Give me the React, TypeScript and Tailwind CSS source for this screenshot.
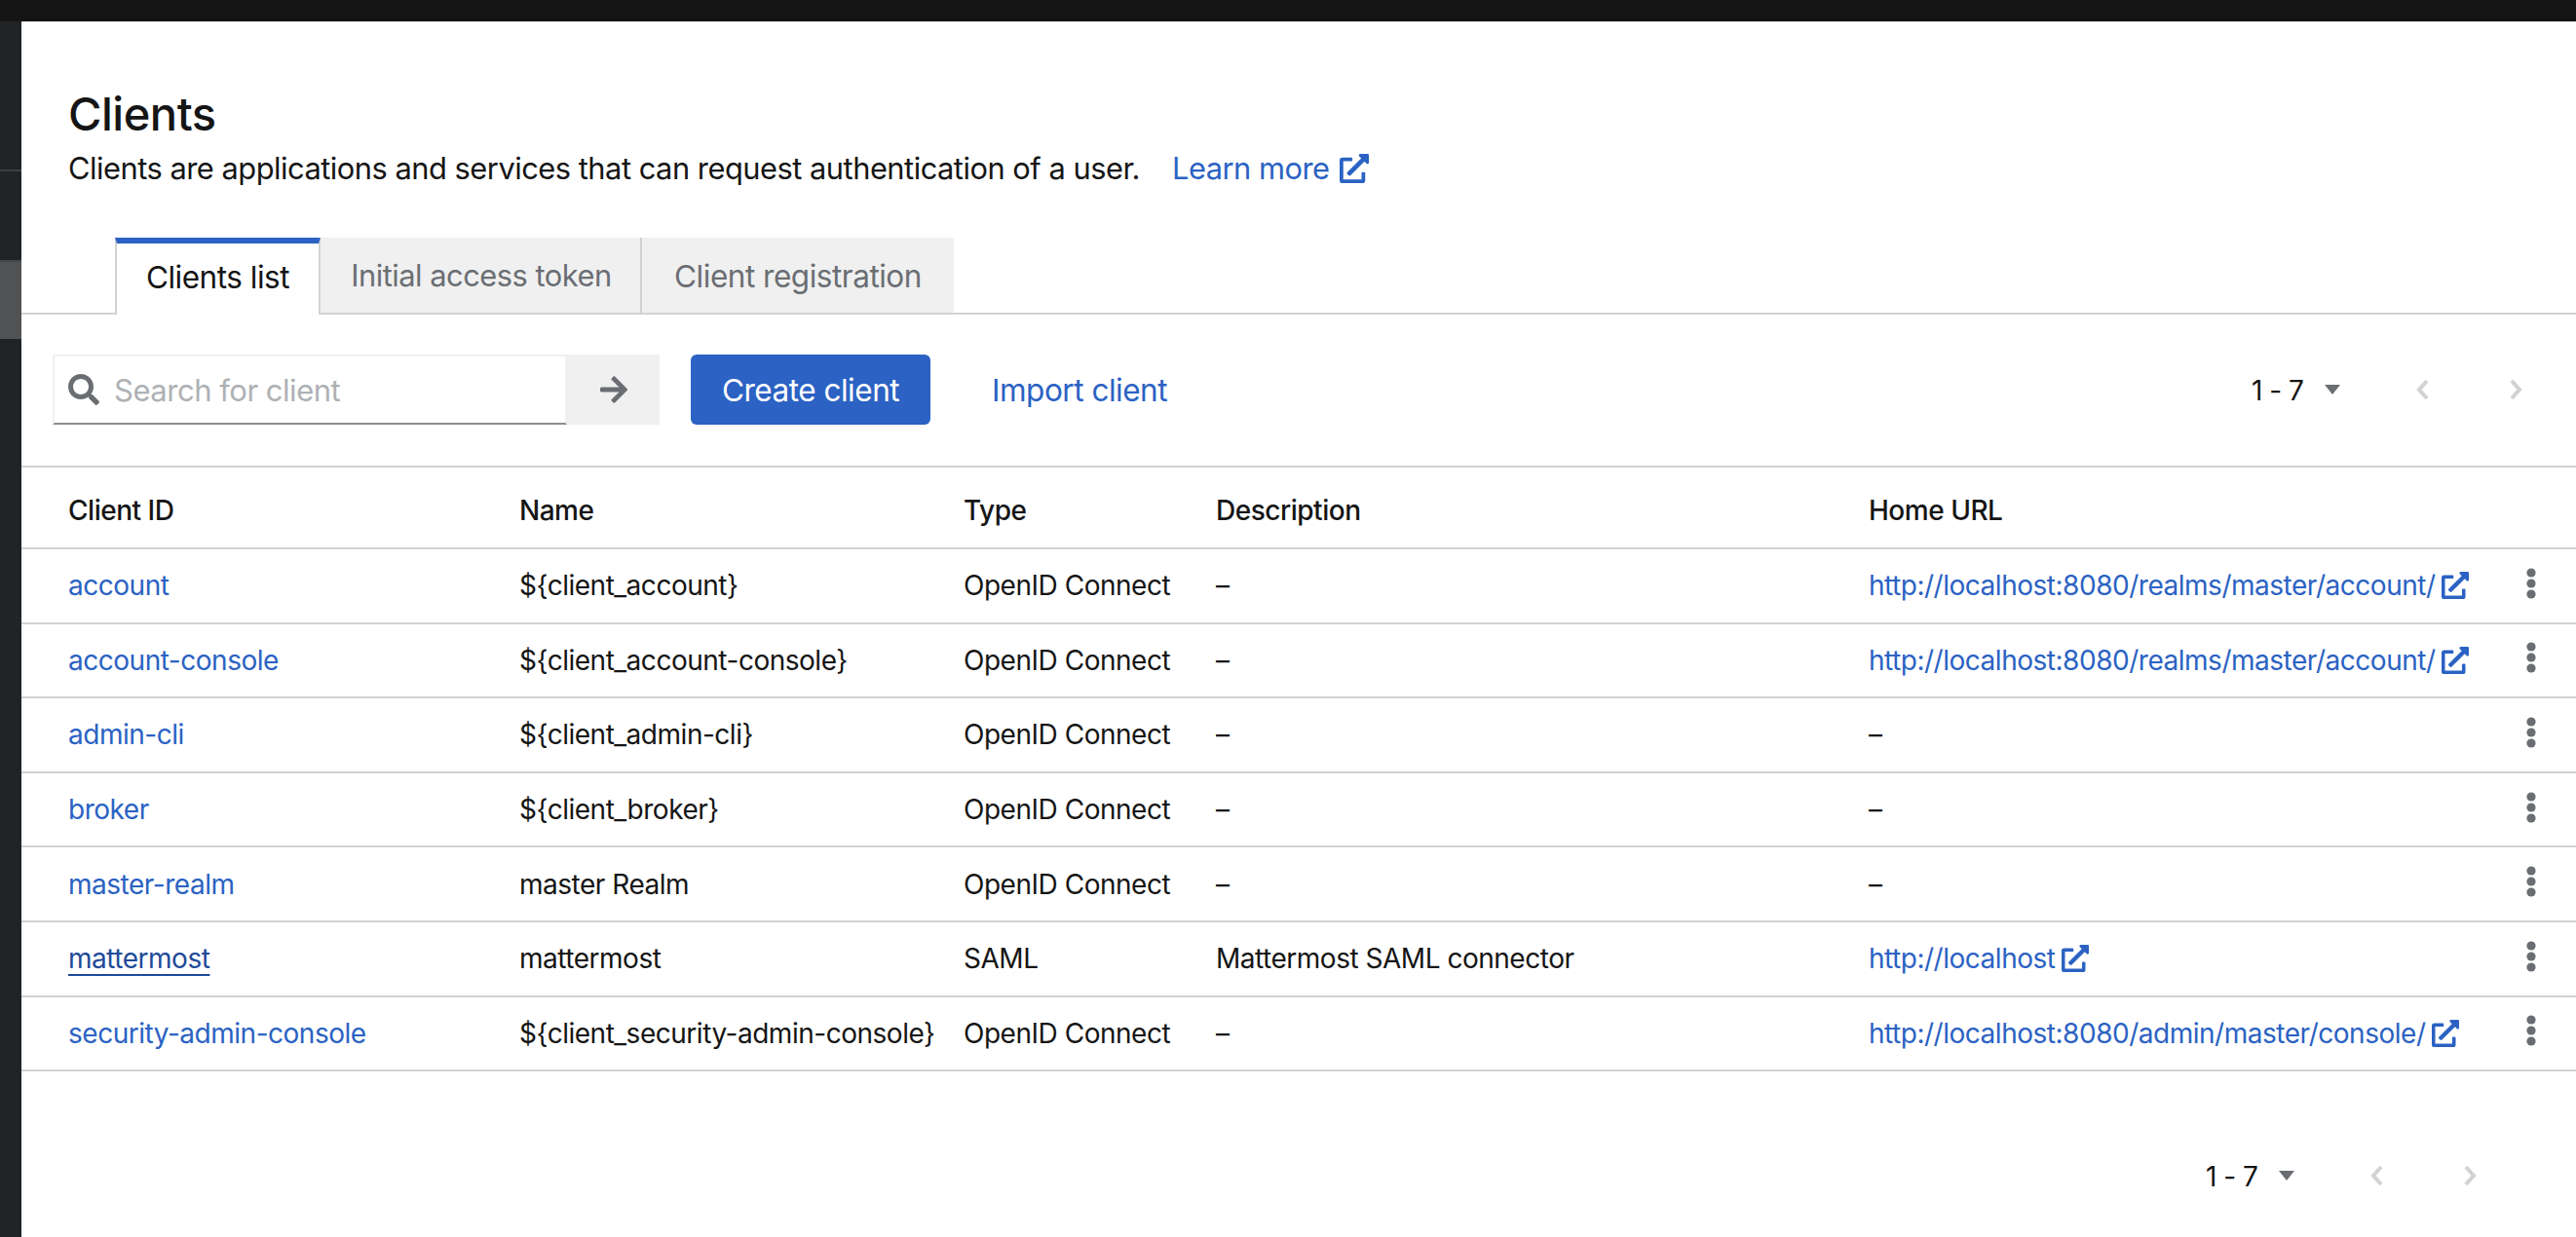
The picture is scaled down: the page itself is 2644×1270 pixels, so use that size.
import React from "react";

const Ext = ({ className = "" }: { className?: string }) => (
  <svg viewBox="0 0 512 512" className={className} fill="currentColor">
    <path d="M432 320h-32a16 16 0 0 0-16 16v112H64V128h144a16 16 0 0 0 16-16V80a16 16 0 0 0-16-16H48a48 48 0 0 0-48 48v352a48 48 0 0 0 48 48h352a48 48 0 0 0 48-48V336a16 16 0 0 0-16-16zM488 0H360c-21.4 0-32 25.9-17 41l35.7 35.7L135 320.4a24 24 0 0 0 0 34l22.6 22.6a24 24 0 0 0 34 0L435.300 133.300 471 169c15 15 41 4.500 41-17V24a24 24 0 0 0-24-24z" />
  </svg>
);

const Kebab = () => (
  <svg viewBox="0 0 10 32" className="w-[10px] h-[32px] text-[#6a6e73]" fill="currentColor">
    <circle cx="5" cy="5" r="4.600" />
    <circle cx="5" cy="16" r="4.600" />
    <circle cx="5" cy="27" r="4.600" />
  </svg>
);

const Caret = () => (
  <svg viewBox="0 0 16 10" className="w-[16px] h-[10px] text-[#6a6e73]" fill="currentColor">
    <path d="M0 0h16L8 10z" />
  </svg>
);

const Chev = ({ dir }: { dir: "l" | "r" }) => (
  <svg viewBox="0 0 14 22" className="w-[14px] h-[22px] text-[#d2d2d2]" fill="none" stroke="currentColor" strokeWidth="4">
    <path d={dir === "l" ? "M11 2 3 11l8 9" : "M3 2l8 9-8 9"} />
  </svg>
);

const Pager = ({ className }: { className: string }) => (
  <div className={"flex items-center " + className}>
    <span className="text-[28px] pt-[2px] text-[#151515] w-[53px] whitespace-nowrap">1 - 7</span>
    <span className="ml-[22px]"><Caret /></span>
    <span className="ml-[78px]"><Chev dir="l" /></span>
    <span className="ml-[81px]"><Chev dir="r" /></span>
  </div>
);

const rows = [
  ["account", "${client_account}", "OpenID Connect", "–", "http://localhost:8080/realms/master/account/"],
  ["account-console", "${client_account-console}", "OpenID Connect", "–", "http://localhost:8080/realms/master/account/"],
  ["admin-cli", "${client_admin-cli}", "OpenID Connect", "–", ""],
  ["broker", "${client_broker}", "OpenID Connect", "–", ""],
  ["master-realm", "master Realm", "OpenID Connect", "–", ""],
  ["mattermost", "mattermost", "SAML", "Mattermost SAML connector", "http://localhost"],
  ["security-admin-console", "${client_security-admin-console}", "OpenID Connect", "–", "http://localhost:8080/admin/master/console/"],
];

const gridCols = "grid grid-cols-[463px_456px_259px_670px_1fr_92px] pl-[48px] items-center";

export default function App() {
  return (
    <div className="w-[2644px] h-[1270px] overflow-hidden bg-[#141414] flex flex-col font-['Inter',sans-serif] tracking-[-0.03em] text-[#151515]">
      <div className="h-[22px] shrink-0" />
      <div className="flex flex-1 min-h-0">
        <div className="w-[22px] shrink-0 bg-[#212427] flex flex-col">
          <div className="h-[154px] shrink-0 border-b-2 border-[#3c3f42]" />
          <div className="h-[91px] shrink-0" />
          <div className="h-[81px] shrink-0 bg-[#505254] border-t-2 border-[#45484b]" />
        </div>
        <main className="flex-1 bg-white">
          <div className="pl-[48px] pt-[73px]">
            <h1 className="text-[47px] leading-[44px] font-medium">Clients</h1>
            <p className="mt-[12px] text-[30.800px] leading-[44px] flex items-center whitespace-nowrap">
              Clients are applications and services that can request authentication of a user.
              <span className="ml-[33px] text-[#2b62c3] flex items-center">Learn more<Ext className="ml-[10px] w-[30px] h-[30px]" /></span>
            </p>
          </div>
          <div className="mt-[49px] h-[79px] flex pl-[96px] border-b-2 border-[#d2d2d2] text-[31.500px]">
            <div className="w-[211px] h-[79px] pb-[4px] border-t-[6px] border-t-[#2b62c3] border-x-2 border-x-[#d2d2d2] bg-white flex items-center justify-center">Clients list</div>
            <div className="w-[330px] h-[77px] pt-[2px] pl-[2px] text-[30.800px] bg-[#f0f0f0] border-r-2 border-r-[#d2d2d2] text-[#6a6e73] flex items-center justify-center">Initial access token</div>
            <div className="w-[320px] h-[77px] pt-[2px] bg-[#f0f0f0] text-[#6a6e73] flex items-center justify-center">Client registration</div>
          </div>
          <div className="mt-[41px] h-[72px] flex items-center pl-[32px] text-[31.500px]">
            <div className="w-[528px] h-[72px] border-x-2 border-t-2 border-[#f0f0f0] border-b-2 border-b-[#8a8d90] flex items-center pl-[14px]">
              <svg viewBox="0 0 512 512" className="w-[32px] h-[32px] text-[#6a6e73]" fill="currentColor">
                <path d="M505 442.700 405.300 343c-4.500-4.500-10.600-7-17-7H372c27.600-35.300 44-79.700 44-128C416 93.100 322.900 0 208 0S0 93.100 0 208s93.100 208 208 208c48.300 0 92.700-16.400 128-44v16.300c0 6.400 2.500 12.500 7 17l99.700 99.700c9.400 9.400 24.600 9.400 33.900 0l28.300-28.300c9.400-9.400 9.400-24.600.1-34zM208 336c-70.700 0-128-57.200-128-128 0-70.700 57.200-128 128-128 70.700 0 128 57.200 128 128 0 70.700-57.200 128-128 128z" />
              </svg>
              <span className="ml-[15px] pt-[2px] text-[#aeb1b4] text-[31px]">Search for client</span>
            </div>
            <div className="w-[95px] h-[72px] bg-[#f0f0f0] flex items-center justify-center text-[#6a6e73]">
              <svg viewBox="0 0 448 512" className="w-[30px] h-[32px]" fill="currentColor">
                <path d="m190.500 66.900 22.200-22.200c9.400-9.400 24.600-9.400 33.900 0L441 239c9.400 9.400 9.400 24.600 0 33.900L246.600 467.300c-9.400 9.400-24.600 9.400-33.900 0l-22.200-22.200c-9.500-9.500-9.300-25 .4-34.300L311.400 296H24c-13.300 0-24-10.700-24-24v-32c0-13.300 10.700-24 24-24h287.400L190.900 101.200c-9.800-9.300-10-24.800-.4-34.300z" />
              </svg>
            </div>
            <button className="ml-[32px] w-[246px] h-[72px] pt-[2px] rounded-[6px] bg-[#2b62c3] text-white">Create client</button>
            <span className="ml-[63px] pt-[2px] text-[#2b62c3]">Import client</span>
            <Pager className="ml-auto mr-[55px]" />
          </div>
          <div className="mt-[42px] border-t-2 border-[#d2d2d2] text-[28px]">
            <div className={gridCols + " h-[84px] pt-[6px] font-medium border-b-2 border-[#d2d2d2]"}>
              <div>Client ID</div><div>Name</div><div>Type</div><div>Description</div><div>Home URL</div><div />
            </div>
            {rows.map((r, i) => (
              <div key={r[0]} className={gridCols + " h-[76.600px] border-b-2 border-[#d2d2d2] whitespace-nowrap"}>
                <div className="text-[#2b62c3]">
                  <span className={i === 5 ? "underline decoration-2 underline-offset-[6px] text-[#1f4a99]" : ""}>{r[0]}</span>
                </div>
                <div>{r[1]}</div>
                <div>{r[2]}</div>
                <div>{r[3]}</div>
                <div className="flex items-center">
                  {r[4] ? (
                    <span className="text-[#2b62c3] flex items-center">{r[4]}<Ext className="ml-[6px] w-[28px] h-[28px]" /></span>
                  ) : "–"}
                </div>
                <div className="pl-[41px] pb-[5px]"><Kebab /></div>
              </div>
            ))}
          </div>
          <Pager className="mt-[85px] justify-end mr-[102px]" />
        </main>
      </div>
    </div>
  );
}
